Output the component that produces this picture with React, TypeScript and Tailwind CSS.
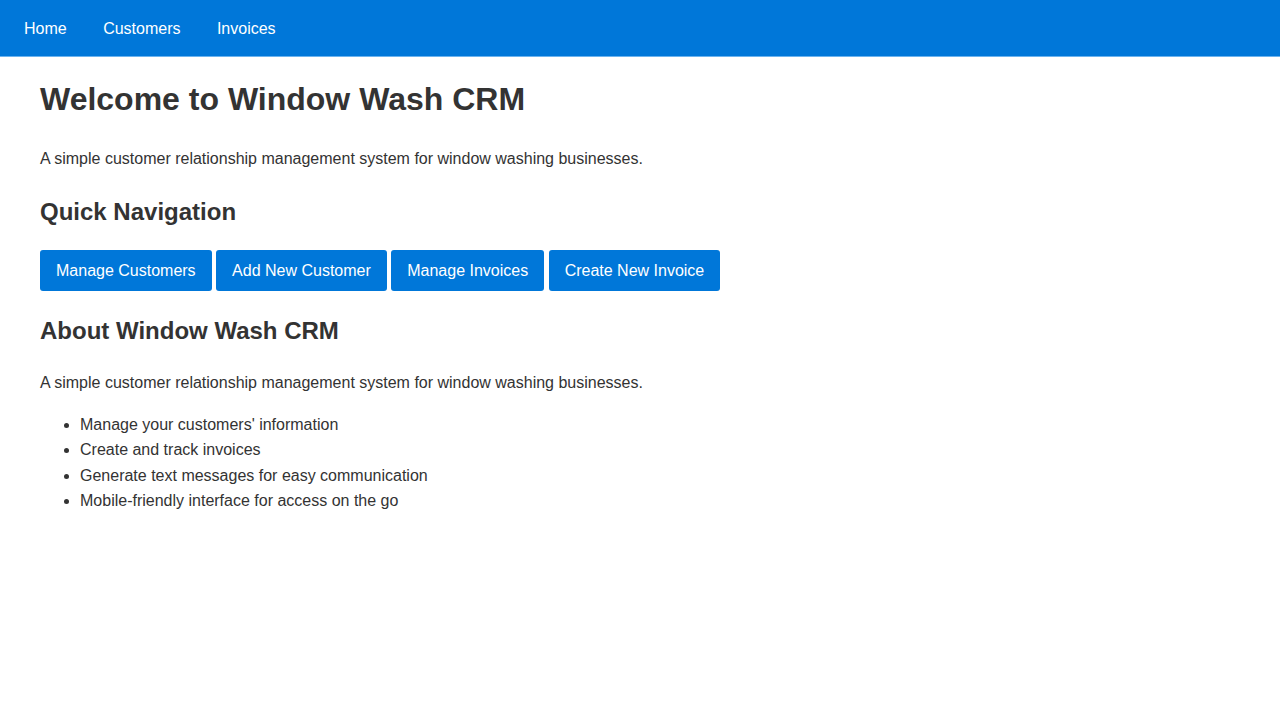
const links = ["Home", "Customers", "Invoices"]
const buttons = ["Manage Customers", "Add New Customer", "Manage Invoices", "Create New Invoice"]
const features = [
  "Manage your customers' information",
  "Create and track invoices",
  "Generate text messages for easy communication",
  "Mobile-friendly interface for access on the go",
]

const App = () => {
  return (
    <div className="min-h-screen bg-white text-[#333] font-['Liberation_Sans',Arial,sans-serif]">
      <nav className="h-[57px] bg-[#0077d9] border-b border-[#6bb3ef] flex items-center px-2 gap-[4.45px]">
        {links.map((l) => (
          <a key={l} href="#" className="px-4 pt-[2px] text-base text-white leading-[56px]">
            {l}
          </a>
        ))}
      </nav>
      <main className="px-10 pt-[23px]">
        <h1 className="text-[32px] font-bold leading-[38px]">Welcome to Window Wash CRM</h1>
        <p className="mt-[28px] text-base leading-[25.6px]">
          A simple customer relationship management system for window washing businesses.
        </p>
        <h2 className="mt-[25px] text-2xl font-bold leading-[29px]">Quick Navigation</h2>
        <div className="mt-[24.5px] flex gap-[4.45px]">
          {buttons.map((b) => (
            <button
              key={b}
              className="h-[41px] px-4 bg-[#0077d9] text-white text-base rounded-[3px]"
            >
              {b}
            </button>
          ))}
        </div>
        <h2 className="mt-[24.5px] text-2xl font-bold leading-[29px]">About Window Wash CRM</h2>
        <p className="mt-[25.5px] text-base leading-[25.6px]">
          A simple customer relationship management system for window washing businesses.
        </p>
        <ul className="mt-4 list-disc pl-10 text-base leading-[25.6px]">
          {features.map((f) => (
            <li key={f}>{f}</li>
          ))}
        </ul>
      </main>
    </div>
  )
}

export default App
